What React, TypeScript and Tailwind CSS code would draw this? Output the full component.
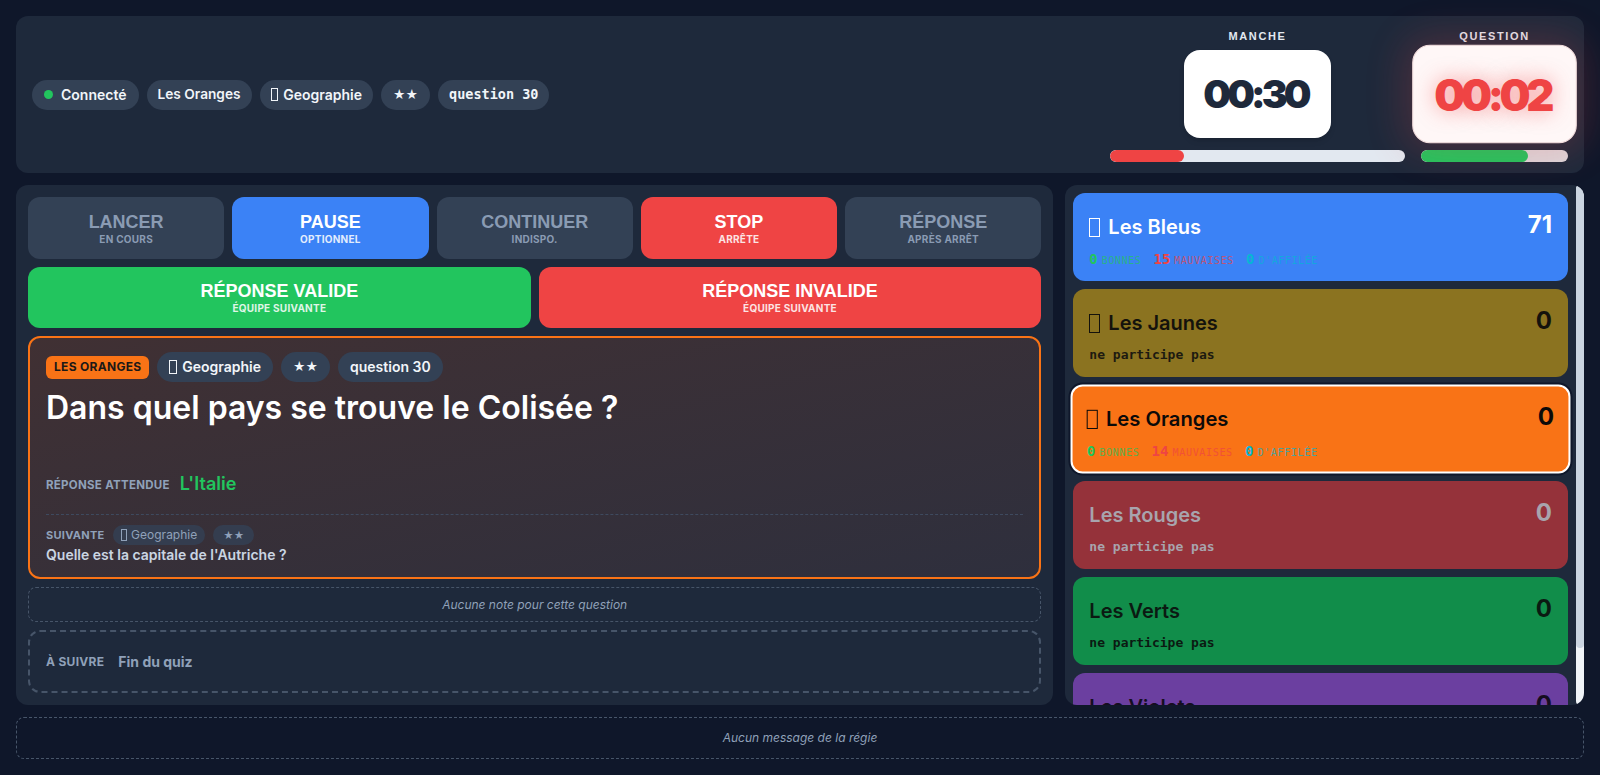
import React from "react";

type Stats = { good: number; bad: number; streak: number };

type Team = {
  name: string;
  score: number;
  icon: boolean;
  bg: string;
  text: string;
  sub: string;
  stats: Stats | null;
  selected?: boolean;
};

const teams: Team[] = [
  { name: "Les Bleus", score: 71, icon: true, bg: "bg-[#3b82f6]", text: "text-white", sub: "", stats: { good: 0, bad: 15, streak: 0 } },
  { name: "Les Jaunes", score: 0, icon: true, bg: "bg-[#8b7320]", text: "text-[#14120c]", sub: "text-[#1d1a10]", stats: null },
  { name: "Les Oranges", score: 0, icon: true, bg: "bg-[#f97316]", text: "text-[#0c0a09]", sub: "", stats: { good: 0, bad: 14, streak: 0 }, selected: true },
  { name: "Les Rouges", score: 0, icon: false, bg: "bg-[#95323a]", text: "text-[#a8a4ad]", sub: "text-[#a8a4ad]", stats: null },
  { name: "Les Verts", score: 0, icon: false, bg: "bg-[#118d4a]", text: "text-[#0b1a12]", sub: "text-[#0b1a12]", stats: null },
  { name: "Les Violets", score: 0, icon: false, bg: "bg-[#6b3fa0]", text: "text-[#150d20]", sub: "text-[#150d20]", stats: null },
];

// emoji glyph that has no font here: drawn as the empty box the browser shows
const Tofu = () => (
  <span className="inline-block shrink-0 w-[0.55em] h-[0.95em] border-[1.5px] border-current align-[-0.18em]" />
);

const Chip: React.FC<{ children: React.ReactNode; className?: string }> = ({ children, className = "" }) => (
  <span className={`inline-flex items-center gap-1.5 h-[30px] px-3 rounded-full bg-[#334155] text-slate-100 text-sm font-semibold ${className}`}>
    {children}
  </span>
);

const CtrlButton: React.FC<{ label: string; sub: string; tone: "muted" | "blue" | "red" }> = ({ label, sub, tone }) => {
  const tones = {
    muted: "bg-[#334155] text-[#8a9bb3]",
    blue: "bg-[#3b82f6] text-white",
    red: "bg-[#ef4444] text-white",
  };
  return (
    <button className={`h-[62px] rounded-xl flex flex-col items-center justify-center ${tones[tone]}`}>
      <span className="font-['Liberation_Sans',sans-serif] text-lg font-bold leading-[22px] translate-y-px">{label}</span>
      <span className={`text-[10px] font-bold uppercase tracking-wide ${tone === "muted" ? "" : "opacity-85"}`}>{sub}</span>
    </button>
  );
};

const StatLine: React.FC<{ stats: Stats }> = ({ stats }) => (
  <div className="flex items-baseline gap-3 font-['DejaVu_Sans_Mono',monospace] h-5">
    <span className="flex items-baseline gap-1">
      <b className="text-sm text-[#22c55e]">{stats.good}</b>
      <span className="text-[10px] tracking-[0.06em] uppercase text-[#22c55e] opacity-70">bonnes</span>
    </span>
    <span className="flex items-baseline gap-1">
      <b className="text-sm text-[#ef4444]">{stats.bad}</b>
      <span className="text-[10px] tracking-[0.06em] uppercase text-[#ef4444] opacity-70">mauvaises</span>
    </span>
    <span className="flex items-baseline gap-1">
      <b className="text-sm text-[#06b6d4]">{stats.streak}</b>
      <span className="text-[10px] tracking-[0.06em] uppercase text-[#06b6d4] opacity-70">d'affilée</span>
    </span>
  </div>
);

const TeamCard: React.FC<{ team: Team }> = ({ team }) => (
  <div
    className={`shrink-0 rounded-xl ${team.bg} ${team.text} ${
      team.selected
        ? "border-2 border-white shadow-[0_0_0_2px_#0f172a] scale-[1.01] px-[14px] pt-[14px] pb-[10px]"
        : "px-4 pt-4 pb-3"
    }`}
  >
    <div className="flex items-center justify-between h-8">
      <div className="flex items-center gap-2 text-xl font-semibold translate-y-0.5">
        {team.icon && <Tofu />}
        <span>{team.name}</span>
      </div>
      <span className="text-2xl font-bold">{team.score}</span>
    </div>
    <div className="mt-2">
      {team.stats ? (
        <StatLine stats={team.stats} />
      ) : (
        <div className={`h-5 font-['DejaVu_Sans_Mono',monospace] text-[13px] font-bold ${team.sub}`}>ne participe pas</div>
      )}
    </div>
  </div>
);

const App: React.FC = () => {
  return (
    <div className="h-screen flex flex-col gap-3 p-4 bg-[#0f172a] font-['Inter',sans-serif] overflow-hidden">
      {/* Top bar: status chips + timers */}
      <header className="h-[157px] shrink-0 rounded-xl bg-[#1e293b] flex items-center justify-between px-4">
        <div className="flex items-center gap-2">
          <Chip>
            <span className="w-[9px] h-[9px] rounded-full bg-[#22c55e] mr-0.5" />
            Connecté
          </Chip>
          <Chip className="px-[11px] text-[13.7px]">Les Oranges</Chip>
          <Chip className="gap-[5px] px-[11px]">
            <Tofu />
            Geographie
          </Chip>
          <Chip className="text-xs">★★</Chip>
          <Chip className="font-['DejaVu_Sans_Mono',monospace] font-bold text-[13.5px] px-[11px]">question 30</Chip>
        </div>

        <div className="flex items-start gap-4">
          <div className="w-[295px] flex flex-col items-center">
            <span className="h-4 text-[11px] font-bold tracking-[0.15em] text-slate-200 font-['Liberation_Sans',sans-serif]">MANCHE</span>
            <div className="mt-1.5 w-[147px] h-[88px] rounded-2xl bg-white flex items-center justify-center shadow-md">
              <span className="text-[39px] leading-none font-black tracking-[-0.1em] text-[#1e293b] -translate-x-0.5">00:30</span>
            </div>
            <div className="mt-3 w-full h-3 rounded-full bg-[#e2e8f0] overflow-hidden">
              <div className="h-full w-1/4 rounded-full bg-[#ef4444]" />
            </div>
          </div>
          <div className="w-[147px] flex flex-col items-center">
            <span className="h-4 text-[11px] font-bold tracking-[0.15em] text-slate-200 font-['Liberation_Sans',sans-serif]">QUESTION</span>
            <div className="mt-1.5 w-[147px] h-[88px] rounded-2xl bg-[#fff7f7] border border-[#f1dcdc] flex items-center justify-center scale-[1.12] shadow-[0_0_34px_8px_rgba(239,68,68,0.2)]">
              <span className="text-[39px] leading-none font-black tracking-[-0.1em] text-[#ef4444] -translate-x-0.5 [text-shadow:0_0_18px_rgba(239,68,68,0.5)]">00:02</span>
            </div>
            <div className="mt-3 w-full h-3 rounded-full bg-[#dcd6da] overflow-hidden">
              <div className="h-full w-[73%] rounded-full bg-[#22c55e]" />
            </div>
          </div>
        </div>
      </header>

      {/* Main area */}
      <main className="flex-1 min-h-0 grid grid-cols-[2fr_1fr] gap-3">
        <section className="rounded-xl bg-[#1e293b] p-3 flex flex-col gap-2 min-h-0">
          <div className="grid grid-cols-5 gap-2">
            <CtrlButton label="LANCER" sub="en cours" tone="muted" />
            <CtrlButton label="PAUSE" sub="optionnel" tone="blue" />
            <CtrlButton label="CONTINUER" sub="indispo." tone="muted" />
            <CtrlButton label="STOP" sub="arrête" tone="red" />
            <CtrlButton label="RÉPONSE" sub="après arrêt" tone="muted" />
          </div>
          <div className="grid grid-cols-2 gap-2">
            <button className="h-[61px] rounded-xl bg-[#22c55e] text-white flex flex-col items-center justify-center">
              <span className="font-['Liberation_Sans',sans-serif] text-lg font-bold leading-[22px] translate-y-px">RÉPONSE VALIDE</span>
              <span className="text-[10px] font-bold uppercase tracking-wide opacity-85">équipe suivante</span>
            </button>
            <button className="h-[61px] rounded-xl bg-[#ef4444] text-white flex flex-col items-center justify-center">
              <span className="font-['Liberation_Sans',sans-serif] text-lg font-bold leading-[22px] translate-y-px">RÉPONSE INVALIDE</span>
              <span className="text-[10px] font-bold uppercase tracking-wide opacity-85">équipe suivante</span>
            </button>
          </div>

          {/* Current question */}
          <div className="rounded-xl border-2 border-[#f97316] bg-gradient-to-br from-[#403033] to-[#2e2f3d] px-4 pt-3.5 pb-3">
            <div className="flex items-center gap-2">
              <span className="h-[23px] px-2 rounded-md bg-[#f97316] text-[#1c1917] text-xs font-bold uppercase tracking-wide flex items-center">
                Les Oranges
              </span>
              <Chip className="gap-[5px]">
                <Tofu />
                Geographie
              </Chip>
              <Chip className="text-xs">★★</Chip>
              <Chip>question 30</Chip>
            </div>
            <h1 className="mt-2 min-h-[72px] text-[32px] leading-9 font-semibold text-white">
              Dans quel pays se trouve le Colisée ?
            </h1>
            <div className="mt-2 flex items-center gap-2.5 h-7">
              <span className="text-[11.5px] font-bold uppercase tracking-wide text-slate-400 translate-y-0.5">Réponse attendue</span>
              <span className="text-lg font-semibold text-[#22c55e]">L'Italie</span>
            </div>
            <div className="mt-4 border-t border-dashed border-[#3e4a5f] pt-2.5">
              <div className="flex items-center gap-2">
                <span className="text-[11px] font-bold uppercase tracking-wide text-slate-400">Suivante</span>
                <span className="h-5 px-2 rounded-full bg-[#334155]/80 text-slate-400 text-xs flex items-center gap-1">
                  <Tofu />
                  Geographie
                </span>
                <span className="h-5 px-2.5 rounded-full bg-[#334155]/80 text-slate-400 text-[10px] flex items-center">★★</span>
              </div>
              <p className="text-sm font-semibold text-slate-300 leading-5">Quelle est la capitale de l'Autriche ?</p>
            </div>
          </div>

          <div className="h-[35px] shrink-0 rounded-lg border border-dashed border-[#475569] flex items-center justify-center text-xs italic text-slate-400">
            Aucune note pour cette question
          </div>

          <div className="flex-1 min-h-[61px] rounded-xl border-2 border-dashed border-[#475569] flex items-center gap-3.5 px-4">
            <span className="text-xs font-bold uppercase tracking-wide text-slate-400">À suivre</span>
            <span className="text-sm font-bold text-slate-400">Fin du quiz</span>
          </div>
        </section>

        {/* Teams: list with its (drawn) scrollbar */}
        <aside className="rounded-xl bg-[#1e293b] flex min-h-0 overflow-hidden">
          <div className="flex-1 min-w-0 p-2 flex flex-col gap-2 overflow-hidden">
            {teams.map((t) => (
              <TeamCard key={t.name} team={t} />
            ))}
          </div>
          <div className="w-2 shrink-0 rounded-full bg-[#f1f5f9] flex flex-col">
            <div className="h-[89%] rounded-full bg-[#cbd5e1]" />
          </div>
        </aside>
      </main>

      <footer className="h-[42px] shrink-0 rounded-lg border border-dashed border-[#475569] flex items-center justify-center text-xs italic text-slate-400">
        Aucun message de la régie
      </footer>
    </div>
  );
};

export default App;
